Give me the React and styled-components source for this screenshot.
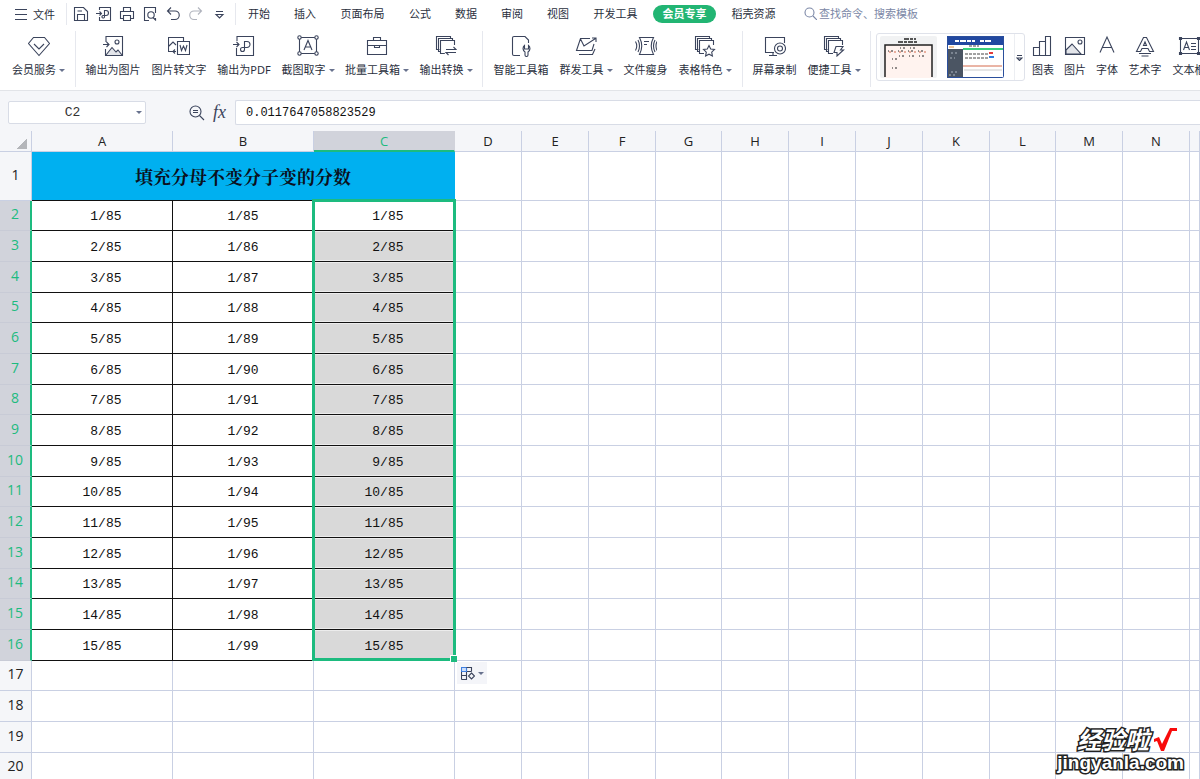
import React from "react";
import styled, { createGlobalStyle, css } from "styled-components";

const INK = "#3b445c";
const GREEN = "#1dbb7f";
const LINE = "#c9d0e3";
const HEAD = "#f5f6f9";
const PICKED = "#d1d3db";

const Global = createGlobalStyle`
  * { box-sizing: border-box; }
  html, body, #root { height: 100%; }
  body {
    margin: 0;
    overflow: hidden;
    background: #fff;
    color: #2a2f3d;
    font-family: "Noto Sans", "Noto Sans CJK SC", sans-serif;
    font-size: 11px;
  }
  button, input { font: inherit; color: inherit; margin: 0; padding: 0; border: 0; background: none; }
`;

const Page = styled.div`
  position: relative;
  display: flex;
  flex-direction: column;
  height: 100%;
  overflow: hidden;
`;

/* ---------- menu bar ---------- */
const MenuBar = styled.nav`
  display: flex;
  align-items: center;
  flex: none;
  height: 27px;
  padding-left: 14px;
  white-space: nowrap;
`;
const FileButton = styled.button`
  display: flex;
  align-items: center;
  gap: 5px;
  width: 52px;
`;
const Divider = styled.span`
  flex: none;
  width: 1px;
  height: ${(p) => p.$h}px;
  background: #e6e8ee;
`;
const QuickBar = styled.div`
  display: flex;
  align-items: center;
  gap: 7px;
  width: 168px;
  padding-left: 6px;
`;
const QuickButton = styled.button`
  display: flex;
  width: 16px;
  height: 16px;
  opacity: ${(p) => (p.$dim ? 0.4 : 1)};
`;
const Tab = styled.button`
  flex: none;
  width: ${(p) => (p.$wide ? 69 : 46)}px;
  line-height: 18px;
  text-align: center;
`;
const Pill = styled.span`
  display: block;
  margin: 0 3px;
  border-radius: 9px;
  background: #22b573;
  color: #fff;
  font-weight: 700;
`;
const Search = styled.label`
  display: flex;
  align-items: center;
  gap: 2px;
  margin-left: 16px;
  color: #7b87a6;
`;
const SearchInput = styled.input`
  width: 140px;
  outline: 0;
  &::placeholder { color: #7b87a6; opacity: 1; }
`;

/* ---------- ribbon ---------- */
const Ribbon = styled.div`
  display: flex;
  flex: none;
  height: 64px;
  padding: 4px 0 0 2px;
  border-bottom: 1px solid #e2e4e8;
  white-space: nowrap;
`;
const Group = styled.div`
  display: flex;
  gap: 10px;
  padding: 0 ${(p) => p.$pad}px;
`;
const Tool = styled.button`
  display: flex;
  flex-direction: column;
  align-items: center;
  flex: none;
  gap: 4px;
  width: ${(p) => p.$w}px;
  padding-top: 4px;
`;
const ToolText = styled.span`
  display: flex;
  align-items: center;
  gap: 3px;
  line-height: 18px;
`;
const Arrow = styled.i`
  border: 3px solid transparent;
  border-top-color: #68728e;
  border-bottom: 0;
`;
const Gallery = styled.div`
  display: flex;
  flex: none;
  align-items: center;
  gap: 10px;
  width: 149px;
  height: 48px;
  margin: 2px 7px 0 5px;
  padding-left: 3px;
  border: 1px solid #dfe2ea;
  border-radius: 3px;
`;
const Thumb = styled.button`
  display: flex;
  width: 57px;
  height: 42px;
`;
const More = styled.button`
  display: grid;
  place-items: center;
  width: 11px;
  height: 46px;
  border-left: 1px solid #eceef2;
`;

/* ---------- formula bar ---------- */
const FormulaBar = styled.div`
  display: flex;
  align-items: center;
  flex: none;
  height: 40px;
  padding: 3px 0 0 8px;
  background: ${HEAD};
`;
const NameBox = styled.div`
  display: flex;
  align-items: center;
  width: 138px;
  height: 23px;
  padding-right: 3px;
  border: 1px solid #d8dce6;
  border-radius: 2px;
  background: #fff;
`;
const NameInput = styled.input`
  flex: 1;
  min-width: 0;
  text-align: center;
  font-family: "Liberation Mono", monospace;
  font-size: 13px;
  color: #333;
`;
const FormulaTools = styled.div`
  display: flex;
  align-items: center;
  justify-content: flex-end;
  gap: 8px;
  width: 89px;
  padding-right: 9px;
`;
const FxButton = styled.button`
  display: flex;
  font: italic 18px "Liberation Serif", serif;
  color: ${INK};
`;
const FormulaInput = styled.input`
  flex: 1;
  height: 25px;
  padding: 0 10px;
  border: 1px solid #d8dce6;
  border-right: 0;
  border-radius: 2px 0 0 2px;
  background: #fff;
  font-family: "Liberation Mono", monospace;
  font-size: 12px;
  color: #111;
`;

/* ---------- sheet ---------- */
const Sheet = styled.main`
  position: relative;
  flex: 1;
  min-height: 0;
  overflow: hidden;
`;
const Grid = styled.table`
  width: 100%;
  table-layout: fixed;
  border-collapse: separate;
  border-spacing: 0;
`;
const Col = styled.col`
  width: ${(p) => (p.$w ? p.$w + "px" : "auto")};
`;
const headText = css`
  padding: 0;
  font-family: "Open Sans", sans-serif;
  font-size: 13px;
  font-weight: 400;
  line-height: 18px;
  color: ${(p) => (p.$on ? GREEN : "#222")};
  background: ${(p) => (p.$on ? PICKED : HEAD)};
`;
const ColHead = styled.th`
  ${headText}
  height: 21px;
  border-right: 1px solid ${(p) => (p.$on ? PICKED : LINE)};
  border-bottom: ${(p) => (p.$on ? `2px solid ${GREEN}` : `1px solid ${LINE}`)};
`;
const Corner = styled.th`
  ${headText}
  height: 21px;
  padding: 0 4px 0 0;
  border-right: 1px solid ${LINE};
  border-bottom: 1px solid ${LINE};
`;
const CornerMark = styled.i`
  display: block;
  width: 11px;
  height: 11px;
  margin: 4px 0 0 auto;
  background: linear-gradient(135deg, transparent 50%, #b4b6ba 50%);
`;
const Row = styled.tr`
  height: 31px;
  &:nth-child(3n + 2) { height: 30px; }
`;
const TitleRow = styled.tr`
  height: 49px;
`;
const RowHead = styled.th`
  ${headText}
  padding-bottom: 3px;
  font-size: 14px;
  border-right: ${(p) => (p.$on ? `2px solid ${GREEN}` : `1px solid ${LINE}`)};
  border-bottom: 1px solid ${(p) => (p.$on ? "#c8cbd6" : LINE)};
`;
const Cell = styled.td`
  padding: 0;
  border-right: 1px solid ${LINE};
  border-bottom: 1px solid ${LINE};
`;
const DataCell = styled(Cell)`
  padding-top: 3px;
  border-color: #111;
  text-align: center;
  white-space: pre;
  font-family: "Liberation Mono", monospace;
  font-size: 13px;
  line-height: 18px;
  color: #111;
  ${(p) => p.$picked && css`
    background: #d9d9d9;
    box-shadow: inset 0 0 0 1px #ececec;
  `}
`;
const TitleCell = styled(Cell)`
  border-right-color: #00b0f0;
  border-bottom-color: #111;
  background: #00b0f0;
  color: #0b1020;
  text-align: center;
  font-family: "Liberation Serif", "Noto Serif CJK SC", "Noto Sans CJK SC", serif;
  font-size: 18px;
  font-weight: 700;
`;
const Selection = styled.div`
  position: absolute;
  left: 312px;
  top: 68px;
  width: 144px;
  height: 462px;
  border: 3px solid ${GREEN};
  pointer-events: none;
  &::after {
    content: "";
    position: absolute;
    right: -4px;
    bottom: -4px;
    width: 6px;
    height: 6px;
    border: 1px solid #fff;
    border-width: 1px 0 0 1px;
    background: ${GREEN};
  }
`;
const FillOptions = styled.button`
  position: absolute;
  left: 457px;
  top: 531px;
  display: flex;
  align-items: center;
  gap: 3px;
  width: 30px;
  height: 22px;
  padding-left: 4px;
  background: #f4f5f9;
`;
const Watermark = styled.div`
  position: absolute;
  right: 16px;
  bottom: 7px;
  color: #fff;
  font-family: "Liberation Sans", "Noto Sans CJK SC", sans-serif;
  font-weight: 700;
  -webkit-text-stroke: 3px #222;
  paint-order: stroke fill;
`;
const MarkTop = styled.div`
  display: flex;
  align-items: center;
  justify-content: flex-end;
  gap: 4px;
  padding-right: 5px;
  font-size: 24px;
  font-style: italic;
  line-height: 26px;
`;
const MarkUrl = styled.div`
  font-size: 19px;
  line-height: 18px;
`;

/* ---------- drawings ---------- */
const stack = (
  <>
    <path d="M4.500 14.500H1.500V1.500H15.500V3M6.500 16.500H3.500V3.500H17.500V5" />
    <path d="M10 18.500H5.500V5.500H19.500V10" fill="#fff" />
  </>
);
const ART = {
  member: <path d="M5.500 2.500H16.500L21.500 8.500L11 20.500L.5 8.500ZM6 9L11 14L16 9" />,
  toImage: (
    <>
      <path d="M4 7V1.500H20.500V20.500H3.500V14M1 9.500H7M4.500 7L7 9.500L4.500 12" />
      <path d="M4 20L10 12.500L14 17L16 15L20 20" fill="#e3e5ea" />
      <circle cx="15" cy="7" r="2" />
    </>
  ),
  toText: (
    <>
      <path d="M8 16.500H5L7 18.500M5 16.500L7 14.500M6 16.500H.5V2.500H15.500V6M1 11L5 7L8 10" />
      <path d="M9.500 6.500H21.500V19.500H9.500ZM12 10L13.500 15.500L15.500 11L17.500 15.500L19 10" />
    </>
  ),
  toPdf: (
    <path d="M4 6V1.500H20.500V20.500H3.500V13M0 9.500H6M3.500 7L6 9.500L3.500 12M11.500 14.500V6.500H14A3 3 0 0 1 14 12.500H9.500A2 2 0 1 0 11.500 14.500" />
  ),
  shotText: (
    <>
      <path d="M4 2.500H18M4 18.500H18M2.500 4V17M19.500 4V17M7 15L11 5.500L15 15M8.500 12H13.500" />
      <circle cx="2.500" cy="2.500" r="1.700" fill="#fff" />
      <circle cx="19.500" cy="2.500" r="1.700" fill="#fff" />
      <circle cx="2.500" cy="18.500" r="1.700" fill="#fff" />
      <circle cx="19.500" cy="18.500" r="1.700" fill="#fff" />
    </>
  ),
  briefcase: <path d="M1.500 5.500H20.500V19.500H1.500ZM7.500 5V2.500H14.500V5M1.500 10.500H20.500M8.500 10.500V12.500H13.500V10.500" />,
  convert: (
    <>
      {stack}
      <path d="M10 14.500H21L18 11.500M22 17.500H11L14 20.500" stroke="#fff" strokeWidth="3" />
      <path d="M11 14.500H21L18.500 12M21 17.500H11L13.500 20" />
    </>
  ),
  wrench: (
    <>
      <path d="M10 20.500H4A1.500 1.500 0 0 1 2.500 19V3A1.500 1.500 0 0 1 4 1.500H15L18.500 5V8" />
      <path d="M14.500 10.500A4 4 0 0 0 15 17V20A1.500 1.500 0 0 0 18 20V17A4 4 0 0 0 18.500 10.500V14H14.500Z" fill="#fff" />
    </>
  ),
  send: <path d="M15 3.500H5.500L1.500 15.500H17L19 9M5.500 4L9 11L20.500 3.500M17 3H21V7M4 19.500H17.500L20 14" />,
  slim: (
    <path d="M4.500 2.500H18.500Q14 11 18.500 19.500H4.500Q9 11 4.500 2.500ZM9 6.500H14M9 9.500H12M3 5Q6 11 3 17M.5 6.500Q3 11 .5 15.500M20 5Q17 11 20 17M22 6.500Q20 11 22 15.500" />
  ),
  star: (
    <>
      {stack}
      <path d="M15 10.500L16.700 14L20.500 14.500L17.700 17.200L18.400 21L15 19.200L11.600 21L12.300 17.200L9.500 14.500L13.300 14Z" fill="#fff" />
    </>
  ),
  record: (
    <>
      <path d="M10 17.500H1.500V2.500H20.500V8M5 20.500H13M9 18V20" />
      <circle cx="16" cy="13.500" r="5.500" fill="#fff" />
      <circle cx="16" cy="13.500" r="2.500" />
    </>
  ),
  bolt: (
    <>
      {stack}
      <path d="M13 11.500H20L17.500 15H20.500L14 21V17.500H11Z" fill="#fff" />
    </>
  ),
  chart: <path d="M1.500 12.500H7.500V20.500H1.500ZM7.500 6.500H13.500V20.500H7.500ZM13.500 1.500H18.500V20.500H13.500Z" />,
  picture: (
    <>
      <path d="M1.500 2.500H20.500V19.500H1.500Z" />
      <path d="M2 15L8 9L17 19H2Z" fill="#e3e5ea" />
      <circle cx="16" cy="7" r="2" />
    </>
  ),
  font: <path d="M4 17.500L11 2L18 17.500M6.500 12.500H15.500" />,
  wordArt: (
    <path d="M2.500 16.500L9.500 2.500H12.500L19.500 16.500H15.500L14 13.500H8L6.500 16.500ZM9.500 10.500L11 7L12.500 10.500ZM5 18.500H17M7.500 21H14.500" />
  ),
  textBox: (
    <>
      <path d="M2.500 3.500H20.500V18.500H2.500ZM5.500 15L8.500 7L11.500 15M6.500 12.500H10.500M13 8.500H18M13 11.500H18M13 14.500H18" />
      <path d="M1.500 2.500H3.500V4.500H1.500ZM19.500 2.500H21.500V4.500H19.500ZM1.500 17.500H3.500V19.500H1.500ZM19.500 17.500H21.500V19.500H19.500Z" fill={INK} />
    </>
  ),
};
const QUICK = [
  ["保存", <path d="M1.500 1.500H10.500L14.500 5.500V14.500H1.500ZM4.500 14V8.500H11.500V14M4.500 5H9" />],
  ["输出", <path d="M3.500 4V1.500H14.500V14.500H3.500V11M0 7.500H5.500M3.500 5.500L5.500 7.500L3.500 9.500M8.500 11V4.500H10A2 2 0 0 1 10 9.500H7.500A1.300 1.300 0 1 0 8.500 11" />],
  ["打印", <path d="M4.500 5V1.500H11.500V5M4 12.500H1.500V5.500H14.500V12.500H12M4.500 9.500H11.500V14.500H4.500Z" />],
  ["打印预览", <><path d="M7 14.500H2.500V1.500H13.500V7M13.500 12V14M11 11.500L14 14.500" /><circle cx="9" cy="9" r="3.200" /></>],
  ["撤销", <path d="M6 1.500L2.500 5L6 8.500M3 5H10A4 4 0 0 1 10 13.500H6" />],
  ["恢复", <path d="M10 1.500L13.500 5L10 8.500M13 5H6A4 4 0 0 0 6 13.500H9" />, true],
  ["更多", <path d="M5 5.500H12M5 8.500H12L8.500 12Z" />],
];

const Svg = ({ w, h = w, children }) => (
  <svg width={w} height={h} viewBox={`0 0 ${w} ${h}`} fill="none" stroke={INK} strokeWidth="1.1" aria-hidden="true">
    {children}
  </svg>
);

/* icon, label, width, has a menu */
const GROUPS = [
  { pad: 10, items: [["member", "会员服务", 53, true]] },
  {
    pad: 9,
    items: [
      ["toImage", "输出为图片", 56],
      ["toText", "图片转文字", 56],
      ["toPdf", "输出为PDF", 54],
      ["shotText", "截图取字", 54, true],
      ["briefcase", "批量工具箱", 64, true],
      ["convert", "输出转换", 54, true],
    ],
  },
  {
    pad: 10,
    items: [
      ["wrench", "智能工具箱", 56],
      ["send", "群发工具", 54, true],
      ["slim", "文件瘦身", 45],
      ["star", "表格特色", 54, true],
    ],
  },
  {
    pad: 9,
    items: [
      ["record", "屏幕录制", 45],
      ["bolt", "便捷工具", 54, true],
    ],
  },
];
const INSERT = [
  ["chart", "图表", 22],
  ["picture", "图片", 22],
  ["font", "字体", 22],
  ["wordArt", "艺术字", 34],
  ["textBox", "文本框", 34],
];
const TABS = ["开始", "插入", "页面布局", "公式", "数据", "审阅", "视图", "开发工具", "会员专享", "稻壳资源"];
const LETTERS = "ABCDEFGHIJKLMN".split("");
const WIDTHS = [32, 141, 141, 141, 67, 67, 67, 66, 67, 67, 67, 67, 66, 67, 67, 0];
const DATA = Array.from({ length: 15 }, (_, i) => {
  const n = String(i + 1).padStart(2, "\u00a0") + "/85";
  return [n, `1/${85 + i}`, n];
});
const EMPTY = [17, 18, 19, 20];
const REST = 12;

const ToolItem = ({ item: [icon, label, width, menu] }) => (
  <Tool $w={width}>
    <Svg w={22}>{ART[icon]}</Svg>
    <ToolText>
      {label}
      {menu && <Arrow />}
    </ToolText>
  </Tool>
);
const blanks = (n) => Array.from({ length: n }, (_, i) => <Cell key={i} />);

const PaperThumb = () => (
  <svg width="57" height="42" aria-hidden="true">
    <rect width="57" height="42" rx="2" fill="#f1f2f3" />
    <path d="M24 3H36M18 6H38" stroke="#222" strokeWidth="1.500" strokeDasharray="5 1 3 1" />
    <rect x="5" y="9" width="47" height="33" fill="#fff3ef" />
    <path d="M5 41V9H52V41" fill="none" stroke="#222" strokeWidth="1.500" />
    <path d="M9 16H48" stroke="#d56b4c" strokeDasharray="2 3" />
    <path d="M20 12H38M8 15H46M19 20H46M12 23H17M12 32H17" stroke="#222" strokeDasharray="1 2 2 5" />
  </svg>
);
const BlueThumb = () => (
  <svg width="57" height="42" aria-hidden="true">
    <rect width="57" height="42" rx="1" fill="#fff" />
    <rect width="57" height="9" fill="#2148a0" />
    <path d="M8 5H28M33 5H44" stroke="#fff" strokeWidth="2" strokeDasharray="4 1 6 1" />
    <rect y="13" width="16" height="29" fill="#4b5563" />
    <path d="M2 11H7" stroke="#e2903c" />
    <path d="M16 13H56" stroke="#3bcf7d" strokeWidth="2" />
    <path d="M22 10H32M18 18H42M18 22H42" stroke="#444" strokeDasharray="3 1" />
    <path d="M42 17H46" stroke="#e23c3c" strokeWidth="2" />
    <path d="M42 21H47" stroke="#2d7be0" strokeWidth="2" />
    <path d="M16 30H55" stroke="#d56b4c" />
    <path d="M17 34H55" stroke="#ccc" />
    <path d="M4 17H12M3 22H8M4 36H12M2 39H9" stroke="#aeb6c2" strokeDasharray="2 2" />
    <rect x=".5" y=".5" width="56" height="41" rx="1" fill="none" stroke="#2b4f9c" />
  </svg>
);

export default function App() {
  return (
    <Page>
      <Global />
      <MenuBar>
        <FileButton>
          <Svg w={14}><path d="M1 2.500H13M1 7.500H13M1 12.500H13" /></Svg>
          文件
        </FileButton>
        <Divider $h={22} />
        <QuickBar>
          {QUICK.map(([name, art, dim]) => (
            <QuickButton key={name} aria-label={name} $dim={dim}>
              <Svg w={16}>{art}</Svg>
            </QuickButton>
          ))}
        </QuickBar>
        <Divider $h={22} />
        {TABS.map((t) => (
          <Tab key={t} $wide={t.length > 2}>{t === "会员专享" ? <Pill>{t}</Pill> : t}</Tab>
        ))}
        <Search>
          <Svg w={13}>
            <g stroke="#7b87a6"><circle cx="5.500" cy="5.500" r="4.500" /><path d="M9 9L13 13" /></g>
          </Svg>
          <SearchInput aria-label="搜索" placeholder="查找命令、搜索模板" />
        </Search>
      </MenuBar>

      <Ribbon>
        {GROUPS.map((g, i) => (
          <React.Fragment key={i}>
            <Group $pad={g.pad}>
              {g.items.map((item) => <ToolItem key={item[1]} item={item} />)}
            </Group>
            <Divider $h={56} />
          </React.Fragment>
        ))}
        <Gallery>
          <Thumb aria-label="模板一"><PaperThumb /></Thumb>
          <Thumb aria-label="模板二"><BlueThumb /></Thumb>
          <More aria-label="更多模板"><Svg w={7}><path d="M1 1.500H6M1 4H6L3.500 6.500Z" /></Svg></More>
        </Gallery>
        <Group $pad={0}>
          {INSERT.map((item) => <ToolItem key={item[1]} item={item} />)}
        </Group>
      </Ribbon>

      <FormulaBar>
        <NameBox>
          <NameInput aria-label="名称框" defaultValue="C2" />
          <Arrow />
        </NameBox>
        <FormulaTools>
          <Svg w={17}>
            <circle cx="7.500" cy="7.500" r="5.500" />
            <path d="M11.500 11.500L16 16M5 6.500H10M5 8.500H10" />
          </Svg>
          <FxButton aria-label="插入函数">fx</FxButton>
        </FormulaTools>
        <FormulaInput aria-label="编辑栏" defaultValue="0.0117647058823529" />
      </FormulaBar>

      <Sheet>
        <Grid>
          <colgroup>
            {WIDTHS.map((w, i) => <Col key={i} $w={w} />)}
          </colgroup>
          <thead>
            <tr>
              <Corner><CornerMark /></Corner>
              {LETTERS.map((l) => <ColHead key={l} scope="col" $on={l === "C"}>{l}</ColHead>)}
              <ColHead />
            </tr>
          </thead>
          <tbody>
            <TitleRow>
              <RowHead scope="row">1</RowHead>
              <TitleCell colSpan={3}>填充分母不变分子变的分数</TitleCell>
              {blanks(REST)}
            </TitleRow>
            {DATA.map(([a, b, c], i) => (
              <Row key={i}>
                <RowHead scope="row" $on>{i + 2}</RowHead>
                <DataCell>{a}</DataCell>
                <DataCell>{b}</DataCell>
                <DataCell $picked={i > 0}>{c}</DataCell>
                {blanks(REST)}
              </Row>
            ))}
            {EMPTY.map((n) => (
              <Row key={n}>
                <RowHead scope="row">{n}</RowHead>
                {blanks(REST + 3)}
              </Row>
            ))}
          </tbody>
        </Grid>
        <Selection />
        <FillOptions aria-label="自动填充选项">
          <Svg w={14}>
            <path d="M.5 5.500H10.500M.5 9.500H5.500V1.500M.5 13.500H5.500V9.500M.5 5V13.500" />
            <path d="M.5 5.500V1.500H5.500V5.500Z" stroke="#3f7fe0" fill="#cfe0fa" />
            <path d="M5.500 1.500H10.500V5.500M10.500 7L13.500 10L10.500 13L7.500 10Z" />
          </Svg>
          <Arrow />
        </FillOptions>
      </Sheet>

      <Watermark>
        <MarkTop>
          经验啦
          <svg width="26" height="26" aria-hidden="true">
            <path d="M1 11L6 9L9 16L17 0H24V3H19L11 23H8L4 13L1 14Z" fill="#f80b0b" />
          </svg>
        </MarkTop>
        <MarkUrl>jingyanla.com</MarkUrl>
      </Watermark>
    </Page>
  );
}
